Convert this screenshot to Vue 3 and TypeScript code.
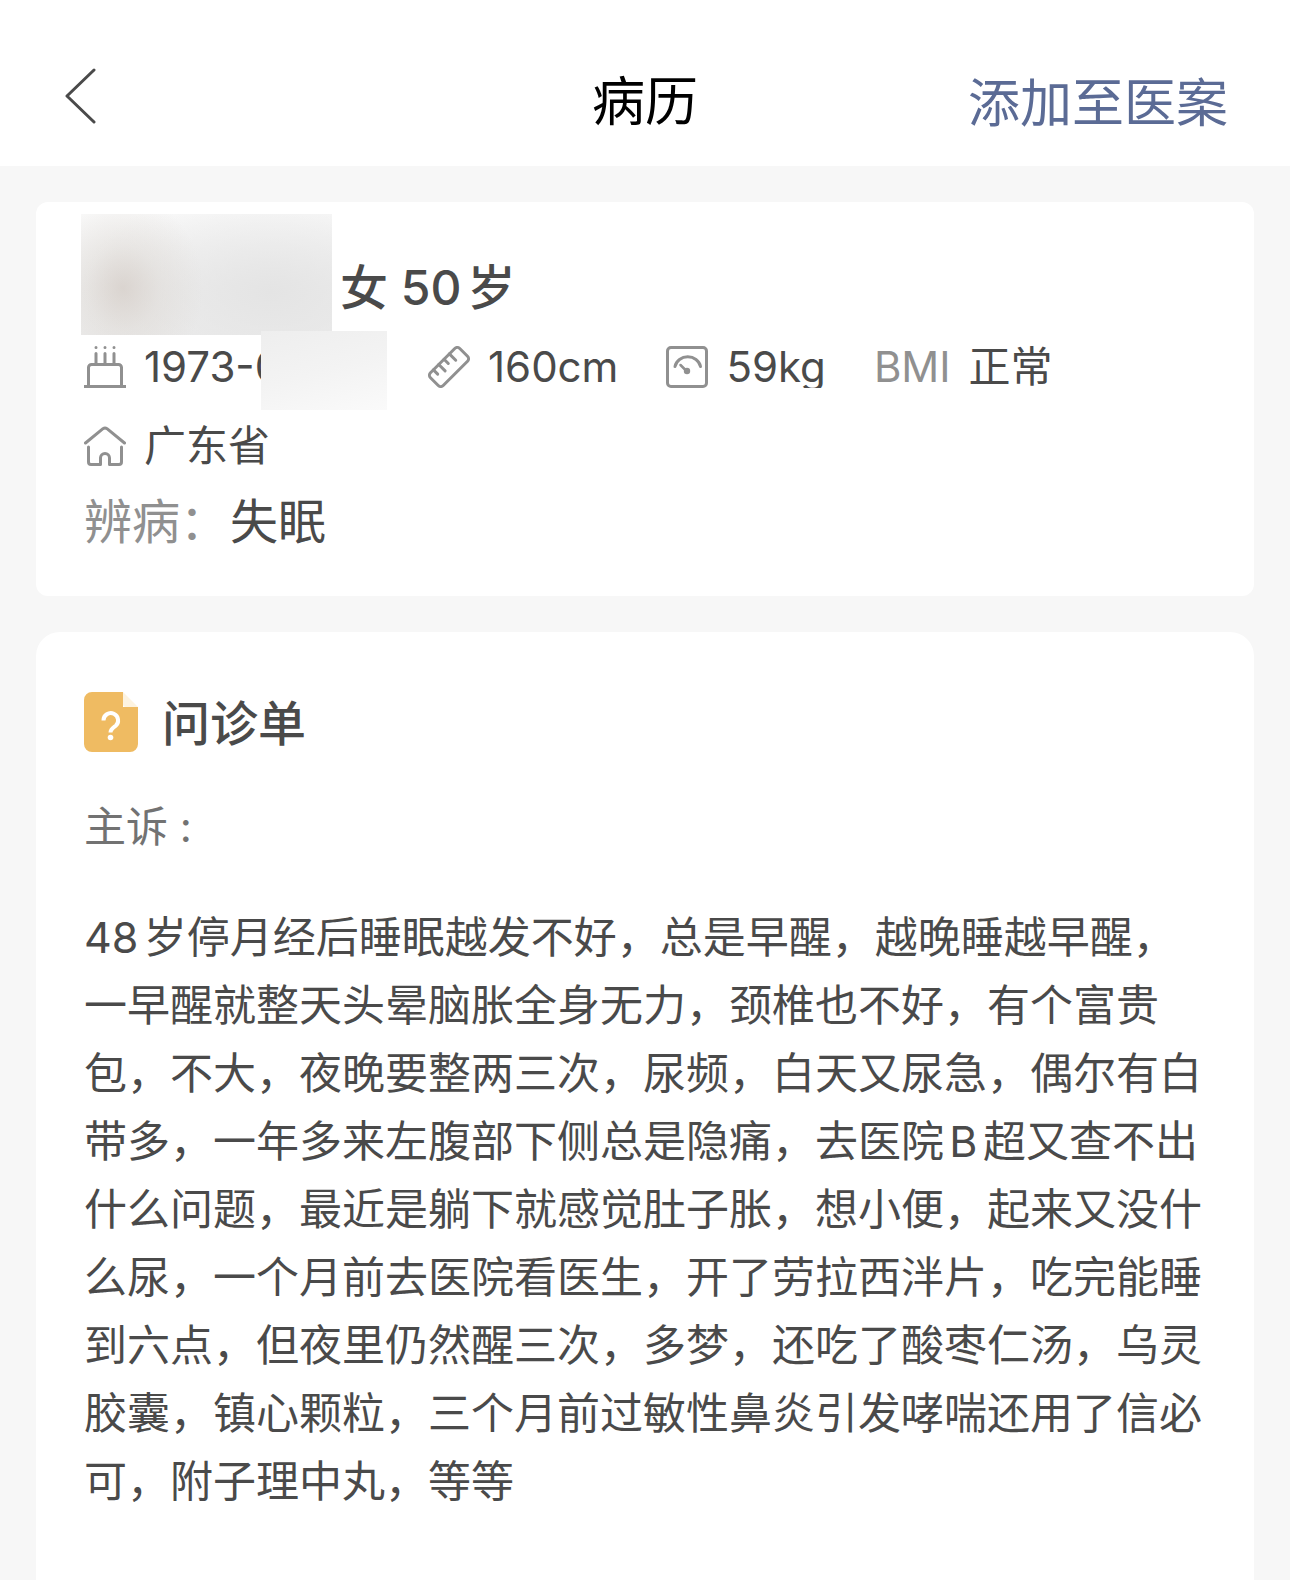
<script setup lang="ts">
interface Patient {
  gender: string
  age: string
  birth: string
  height: string
  weight: string
  bmi: string
  region: string
  disease: string
}

const patient: Patient = {
  gender: '女',
  age: '50岁',
  birth: '1973-0',
  height: '160cm',
  weight: '59kg',
  bmi: '正常',
  region: '广东省',
  disease: '失眠',
}

const complaint: string =
  '48岁停月经后睡眠越发不好，总是早醒，越晚睡越早醒，一早醒就整天头晕脑胀全身无力，颈椎也不好，有个富贵包，不大，夜晚要整两三次，尿频，白天又尿急，偶尔有白带多，一年多来左腹部下侧总是隐痛，去医院B超又查不出什么问题，最近是躺下就感觉肚子胀，想小便，起来又没什么尿，一个月前去医院看医生，开了劳拉西泮片，吃完能睡到六点，但夜里仍然醒三次，多梦，还吃了酸枣仁汤，乌灵胶囊，镇心颗粒，三个月前过敏性鼻炎引发哮喘还用了信必可，附子理中丸，等等'
</script>

<template>
  <div class="page">
    <header class="bar">
      <button class="back" type="button" aria-label="返回">
        <svg width="32" height="56" viewBox="0 0 32 56" fill="none" stroke="#4a4a4a" stroke-width="3" stroke-linecap="round" stroke-linejoin="round">
          <path d="M30 2 3 28 30 54" />
        </svg>
      </button>
      <h1 class="title">病历</h1>
      <button class="add" type="button">添加至医案</button>
    </header>

    <main class="content">
      <section class="card profile">
        <div class="identity">
          <span class="mask-name" aria-hidden="true"></span>
          <span class="who">{{ patient.gender }} {{ patient.age }}</span>
        </div>
        <div class="facts">
          <div class="fact birth">
            <svg class="icon" viewBox="0 0 42 42" fill="none" stroke="#909090" stroke-width="3">
              <path d="M0 40.500H42M4.500 40V21.500a3 3 0 0 1 3-3h27a3 3 0 0 1 3 3V40" />
              <path d="M12 7.500v11M21 7.500v11M30 7.500v11" stroke-linecap="round" />
              <path d="M12 1.500h.01M21 1.500h.01M30 1.500h.01" stroke-linecap="round" />
            </svg>
            <span>{{ patient.birth }}</span>
            <span class="mask-date" aria-hidden="true"></span>
          </div>
          <div class="fact">
            <svg class="icon" viewBox="0 0 42 42" fill="none" stroke="#909090" stroke-width="3">
              <g transform="translate(21 21) rotate(-45)">
                <rect x="-20.700" y="-9" width="41.400" height="18" rx="3.500" />
                <path d="M-13-9v6M-5.500-9v9M2-9v6M9.500-9v9" stroke-linecap="round" />
              </g>
            </svg>
            <span>{{ patient.height }}</span>
          </div>
          <div class="fact">
            <svg class="icon" viewBox="0 0 42 42" fill="none" stroke="#909090" stroke-width="3">
              <rect x="1.500" y="1.500" width="39" height="39" rx="3.500" />
              <path d="M9 20.500a13 12 0 0 1 25.500 0" stroke-linecap="round" />
              <path d="M14.500 19l6 6" stroke-linecap="round" stroke-width="2.500" />
              <circle cx="21" cy="25" r="3.200" fill="#909090" stroke="none" />
            </svg>
            <span class="weight">{{ patient.weight }}</span>
          </div>
          <div class="fact">
            <span class="muted">BMI</span>
            <span>{{ patient.bmi }}</span>
          </div>
        </div>
        <div class="fact region">
          <svg class="icon" viewBox="0 0 42 42" fill="none" stroke="#909090" stroke-width="3" stroke-linecap="round" stroke-linejoin="round">
            <path d="M1.500 18 19 3.700q2-1.500 4 0L40.500 18" />
            <path d="M4.500 22V37a2.500 2.500 0 0 0 2.500 2.500h9.500v-6.500a4.500 4.500 0 0 1 9 0V39.500H35a2.500 2.500 0 0 0 2.500-2.500V22" />
          </svg>
          <span>{{ patient.region }}</span>
        </div>
        <p class="disease"><span class="muted">辨病：</span><span>{{ patient.disease }}</span></p>
      </section>

      <section class="card inquiry">
        <h2 class="heading">
          <svg width="54" height="60" viewBox="0 0 54 60" aria-hidden="true">
            <path d="M8 0H39V15H54V52a8 8 0 0 1-8 8H8a8 8 0 0 1-8-8V8a8 8 0 0 1 8-8z" fill="#efbb62" />
            <path d="M39 0 54 15H42a3 3 0 0 1-3-3z" fill="#fdf3e0" />
            <path d="M19.500 28.500a7.300 7.300 0 1 1 12 5.500c-3 2.200-5 3.400-5 6.500" fill="none" stroke="#fff" stroke-width="4" />
            <circle cx="26.500" cy="45.500" r="2.800" fill="#fff" />
          </svg>
          <span class="heading-text">问诊单</span>
        </h2>
        <h3 class="label">主诉 :</h3>
        <p class="complaint">{{ complaint }}</p>
      </section>
    </main>
  </div>
</template>

<style>
body {
  margin: 0;
}
</style>

<style scoped>
.page {
  min-height: 100vh;
  display: flex;
  flex-direction: column;
  background: #f7f7f7;
  color: #4a4a4a;
  font-family: Inter, "Noto Sans CJK SC", sans-serif;
  font-size: 42px;
  text-autospace: normal;
}

h1,
h2,
h3,
p {
  margin: 0;
  font-weight: 400;
}

button {
  border: 0;
  padding: 0;
  background: none;
  font-family: inherit;
  cursor: pointer;
}

.bar {
  display: grid;
  grid-template-columns: 1fr auto 1fr;
  align-items: start;
  padding: 68px 62px 30px;
  background: #fff;
}

.back {
  justify-self: start;
  display: flex;
  padding-left: 2px;
}

.title {
  font-size: 53px;
  line-height: 68px;
  color: #000;
}

.add {
  justify-self: end;
  padding-top: 4px;
  font-size: 52px;
  line-height: 64px;
  color: #5b6b95;
}

.content {
  flex: 1;
  display: flex;
  flex-direction: column;
  gap: 36px;
  padding: 36px 36px 0;
}

.card {
  background: #fff;
  padding: 0 48px;
}

.profile {
  border-radius: 12px;
  padding-top: 12px;
  padding-bottom: 44px;
}

.identity {
  display: flex;
  align-items: center;
  gap: 8px;
  margin-left: -3px;
  font-size: 48px;
  font-weight: 500;
  line-height: 60px;
}

.who {
  padding-top: 26px;
}

.mask-name {
  width: 251px;
  height: 121px;
  background:
    radial-gradient(ellipse 80px 95px at 42px 74px, rgba(212, 204, 198, 0.75), rgba(220, 215, 210, 0.45) 45%, rgba(235, 234, 232, 0)),
    radial-gradient(ellipse 190px 110px at 190px 78px, #e4e4e4, rgba(236, 236, 236, 0)),
    linear-gradient(#fafafa, #efefef 60%, #ededed);
}

.facts {
  display: flex;
  align-items: center;
  gap: 48px;
  margin-top: 11px;
}

.fact {
  position: relative;
  display: flex;
  align-items: center;
  gap: 18px;
  line-height: 42px;
}

.icon {
  width: 42px;
  height: 42px;
}

.birth {
  width: 296px;
}

.mask-date {
  position: absolute;
  left: 177px;
  top: -15px;
  width: 126px;
  height: 79px;
  background: linear-gradient(165deg, #eeeeee, #f3f3f3 50%, #fafafa);
}

.weight {
  height: 42px;
  overflow: hidden;
}

.muted {
  color: #909090;
}

.region {
  margin-top: 37px;
}

.disease {
  display: flex;
  gap: 2px;
  margin-top: 25px;
  font-size: 48px;
  line-height: 60px;
}

.inquiry {
  flex: 1;
  border-radius: 24px 24px 0 0;
  padding-top: 60px;
  padding-bottom: 64px;
}

.heading {
  display: flex;
  align-items: center;
  gap: 24px;
  font-size: 48px;
  font-weight: 500;
  line-height: 56px;
}

.heading-text {
  padding-top: 4px;
}

.label {
  margin-top: 45px;
  font-size: 42px;
  line-height: 60px;
  color: #727272;
}

.complaint {
  margin-top: 46px;
  font-size: 43px;
  line-height: 68px;
}
</style>
